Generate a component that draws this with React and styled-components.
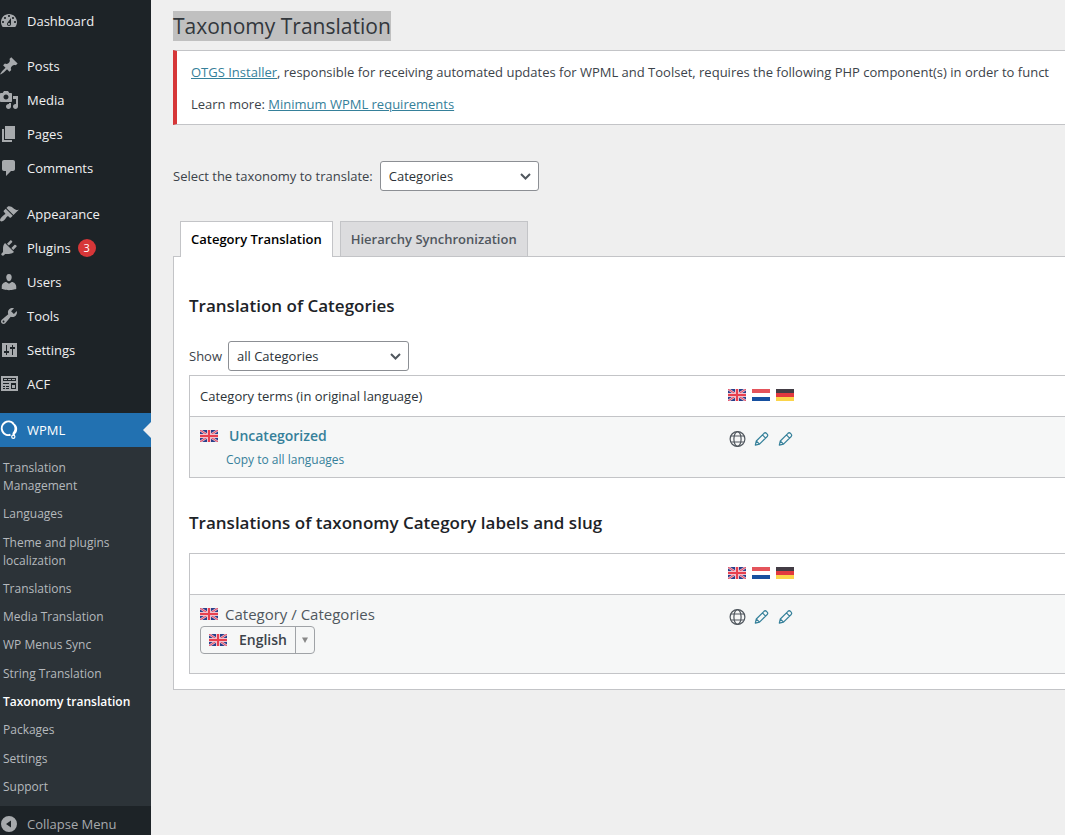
import React from "react";
import styled, { createGlobalStyle } from "styled-components";

const GlobalStyle = createGlobalStyle`
  *, *::before, *::after { box-sizing: border-box; }
  body {
    margin: 0;
    background: #efefef;
    color: #3c434a;
    font-family: "Open Sans", "Noto Sans", sans-serif;
    font-size: 13px;
    line-height: 18px;
  }
  ul { list-style: none; margin: 0; padding: 0; }
  h1, h2, p { margin: 0; }
  a { color: #35809a; }
`;

const Page = styled.div`
  display: flex;
  min-height: 100vh;
`;

/* Sidebar */

const Sidebar = styled.nav`
  flex: 0 0 151px;
  background: #1d2327;
  padding-top: 4px;
`;

const MenuGroup = styled.ul`
  margin-bottom: ${(p) => (p.$tight ? 11 : 12)}px;
`;

const MenuLink = styled.a`
  position: relative;
  display: flex;
  align-items: center;
  gap: 8px;
  height: 34px;
  margin-left: -1px;
  color: ${(p) => (p.$active ? "#fff" : "#f0f0f1")};
  background: ${(p) => (p.$active ? "#2271b1" : "transparent")};
  text-decoration: none;

  svg { flex: none; color: ${(p) => (p.$active ? "#fff" : "#a7aaad")}; }

  &::after {
    content: "";
    display: ${(p) => (p.$active ? "block" : "none")};
    position: absolute;
    right: 0;
    border: 8px solid transparent;
    border-left-width: 0;
    border-right-color: #efefef;
  }
`;

const Badge = styled.span`
  min-width: 18px;
  margin-left: -1px;
  border-radius: 9px;
  background: #d63638;
  color: #fff;
  font-size: 11px;
  text-align: center;
`;

const Submenu = styled.ul`
  display: flex;
  flex-direction: column;
  justify-content: space-between;
  min-height: 359px;
  padding: 12px 20px 10px 3px;
  background: #2c3338;
`;

const SubmenuLink = styled.a`
  display: block;
  color: ${(p) => (p.$current ? "#fff" : "#b5b9bd")};
  font-size: 12px;
  font-weight: ${(p) => (p.$current ? 600 : 400)};
  text-decoration: none;
`;

const CollapseButton = styled.button`
  display: flex;
  align-items: center;
  gap: 8px;
  width: 100%;
  height: 27px;
  margin-left: -1px;
  padding: 8px 0 0;
  border: 0;
  background: none;
  color: #a7aaad;
  font: inherit;
`;

/* Content */

const Content = styled.main`
  flex: 1;
  min-width: 0;
  padding: 11px 0 24px 22px;
  overflow: hidden;
`;

const Title = styled.h1`
  width: fit-content;
  background: #c0c0c0;
  color: #32373c;
  font-size: 21px;
  font-weight: 400;
  line-height: 30px;
`;

const Notice = styled.section`
  display: flex;
  flex-direction: column;
  gap: 14px;
  margin: 9px 0 36px;
  padding: 12px 0 11px 14px;
  border: solid #c3c4c7;
  border-width: 1px 0;
  border-left: 4px solid #d63638;
  background: #fff;
  white-space: nowrap;
`;

const Field = styled.label`
  display: flex;
  align-items: center;
  gap: ${(p) => p.$gap}px;
`;

const SelectBox = styled.span`
  position: relative;
  width: ${(p) => p.$width}px;

  svg {
    position: absolute;
    right: 7px;
    top: 9px;
    pointer-events: none;
  }
`;

const Select = styled.select`
  appearance: none;
  display: block;
  width: 100%;
  height: 30px;
  padding: 0 24px 0 8px;
  border: 1px solid #8c8f94;
  border-radius: 3px;
  background: #fff;
  color: #2c3338;
  font: inherit;
`;

const Tabs = styled.div`
  display: flex;
  gap: 7px;
  margin-top: 30px;
  padding-left: 7px;
`;

const Tab = styled.button`
  height: ${(p) => (p.$active ? 36 : 35)}px;
  margin-bottom: ${(p) => (p.$active ? -1 : 0)}px;
  padding: 0 10px ${(p) => (p.$active ? 1 : 0)}px;
  border: 1px solid #c3c4c7;
  border-bottom: 0;
  background: ${(p) => (p.$active ? "#fff" : "#dcdcde")};
  color: ${(p) => (p.$active ? "#000" : "#50575e")};
  font: inherit;
  font-weight: 600;
  z-index: 1;
`;

const Panel = styled.section`
  padding: 37px 0 15px 15px;
  border: 1px solid #c3c4c7;
  border-right: 0;
  background: #fff;
`;

const Heading = styled.h2`
  margin-bottom: ${(p) => p.$space}px;
  color: #1d2327;
  font-size: 17px;
  font-weight: 600;
  line-height: 24px;
`;

const Table = styled.table`
  width: 100%;
  margin: ${(p) => p.$margin};
  table-layout: fixed;
  border-spacing: 0;
  border: 1px solid #c3c4c7;
  border-right: 0;

  th {
    height: 40px;
    padding: 0 10px;
    color: #2c3338;
    font-weight: 400;
    text-align: left;
  }
  td {
    height: ${(p) => p.$rowHeight}px;
    padding: 10px 10px 8px;
    border-top: 1px solid #c3c4c7;
    background: #f6f7f7;
    vertical-align: top;
  }
  th:first-child { width: 60%; }
  th:last-child, td:last-child { padding-left: 13px; }
  th:last-child { padding-bottom: 2px; }
`;

const IconRow = styled.div`
  display: flex;
  align-items: center;
  gap: 6px;
  margin-top: ${(p) => p.$drop || 0}px;
`;

const IconButton = styled.button`
  display: flex;
  width: 18px;
  height: 18px;
  padding: 0;
  border: 0;
  background: none;
  color: ${(p) => p.$color};
`;

const TermLine = styled.div`
  display: flex;
  align-items: center;
  gap: ${(p) => p.$gap}px;
  color: #50575e;
  font-size: ${(p) => p.$size}px;
`;

const TermLink = styled.a`
  font-weight: 600;
  text-decoration: none;
`;

const CopyLink = styled.a`
  display: block;
  width: fit-content;
  margin: 6px 0 0 26px;
  font-size: 12px;
  text-decoration: none;
`;

const LanguageBox = styled.label`
  display: flex;
  align-items: center;
  width: 115px;
  height: 28px;
  margin-top: 3px;
  padding-left: 8px;
  border: 1px solid #a0a3a7;
  border-radius: 4px;

  > svg:last-child {
    flex: none;
    box-sizing: content-box;
    height: 100%;
    padding: 0 5px;
    border-left: 1px solid #a0a3a7;
  }
`;

const LanguageSelect = styled.select`
  appearance: none;
  flex: 1;
  min-width: 0;
  padding: 0 0 0 12px;
  border: 0;
  background: none;
  color: #3c434a;
  font: inherit;
  font-size: 14px;
  font-weight: 600;
`;

const paths = {
  dashboard:
    "M3.76 16h12.48c1.1-1.37 1.76-3.11 1.76-5 0-4.42-3.58-8-8-8s-8 3.58-8 8c0 1.89.66 3.63 1.76 5zM10 4c.55 0 1 .45 1 1s-.45 1-1 1-1-.45-1-1 .45-1 1-1zM6 6c.55 0 1 .45 1 1s-.45 1-1 1-1-.45-1-1 .45-1 1-1zm8 0c.55 0 1 .45 1 1s-.45 1-1 1-1-.45-1-1 .45-1 1-1zm-5.37 5.55L12 7v6c0 1.1-.9 2-2 2s-2-.9-2-2c0-.57.24-1.08.63-1.45zM4 10c.55 0 1 .45 1 1s-.45 1-1 1-1-.45-1-1 .45-1 1-1zm12 0c.55 0 1 .45 1 1s-.45 1-1 1-1-.45-1-1 .45-1 1-1zm-5 3c0-.55-.45-1-1-1s-1 .45-1 1 .45 1 1 1 1-.45 1-1z",
  pin: "M10.44 3.02l1.82-1.82 6.36 6.35-1.83 1.82c-1.05-.68-2.48-.57-3.41.36l-.75.75c-.92.93-1.04 2.35-.35 3.41l-1.83 1.82-2.41-2.41-2.8 2.79c-.42.42-3.38 2.71-3.8 2.29s1.86-3.39 2.28-3.81l2.79-2.79L4.1 9.36l1.83-1.82c1.05.69 2.48.57 3.4-.36l.75-.75c.93-.92 1.05-2.35.36-3.41z",
  media:
    "M13 11V4c0-.55-.45-1-1-1h-1.67L9 1H5L3.67 3H2c-.55 0-1 .45-1 1v7c0 .55.45 1 1 1h10c.55 0 1-.45 1-1zM7 4.5c1.38 0 2.5 1.12 2.5 2.5S8.38 9.5 7 9.5 4.5 8.38 4.5 7 5.62 4.5 7 4.5zM14 6h5v10.5c0 1.38-1.12 2.5-2.5 2.5S14 17.88 14 16.5s1.12-2.5 2.5-2.5c.17 0 .34.02.5.05V9h-3V6zm-4 8.05V13h2v3.5c0 1.38-1.12 2.5-2.5 2.5S7 17.88 7 16.5 8.12 14 9.5 14c.17 0 .34.02.5.05z",
  pages: "M6 15V2h10v13H6zm-1 1h8v2H3V5h2v11z",
  comments:
    "M5 2h9c1.1 0 2 .9 2 2v7c0 1.1-.9 2-2 2h-2l-5 5v-5H5c-1.1 0-2-.9-2-2V4c0-1.1.9-2 2-2z",
  brush:
    "M14.48 11.06L7.41 3.99l1.5-1.5c.5-.56 2.3-.47 3.51.32 1.21.8 1.43 1.28 2.91 2.1 1.18.64 2.45 1.26 4.45.85zm-.71.71L6.7 4.7 4.93 6.47c-.39.39-.39 1.02 0 1.41l1.06 1.06c.39.39.39 1.03 0 1.42-.6.6-1.43 1.11-2.21 1.69-.35.26-.7.53-1.01.84C1.43 14.23.4 16.08 1.4 17.07c.99 1 2.84-.03 4.18-1.36.31-.31.58-.66.85-1.02.57-.78 1.08-1.61 1.69-2.21.39-.39 1.02-.39 1.41 0l1.06 1.06c.39.39 1.02.39 1.41 0z",
  plug: "M13.11 4.36L9.87 7.6 8 5.73l3.24-3.24c.35-.34 1.05-.2 1.56.32.52.51.66 1.21.31 1.55zm-8 1.77l.91-1.12 9.01 9.01-1.19.84c-.71.71-2.63 1.16-3.82 1.16H6.14L4.9 17.26c-.59.59-1.54.59-2.12 0-.59-.58-.59-1.53 0-2.12l1.24-1.24v-3.88c0-1.13.4-3.19 1.09-3.89zm7.26 3.97l3.24-3.24c.34-.35 1.04-.21 1.55.31.52.51.66 1.21.31 1.55l-3.24 3.25z",
  user: "M10 9.25c-2.27 0-2.73-3.44-2.73-3.44C7 4.02 7.82 2 9.97 2c2.16 0 2.98 2.02 2.71 3.81 0 0-.41 3.44-2.68 3.44zm0 2.57L12.72 10c2.39 0 4.52 2.33 4.52 4.53v2.49s-3.65 1.13-7.24 1.13c-3.65 0-7.24-1.13-7.24-1.13v-2.49c0-2.25 1.94-4.48 4.47-4.48z",
  wrench:
    "M16.68 9.77c-1.34 1.34-3.3 1.67-4.95.99l-5.41 6.52c-.99.99-2.59.99-3.58 0s-.99-2.59 0-3.57l6.52-5.42c-.68-1.65-.35-3.61.99-4.95 1.28-1.28 3.12-1.62 4.72-1.06l-2.89 2.89 2.82 2.82 2.86-2.87c.53 1.58.18 3.39-1.08 4.65zM3.81 16.21c.4.39 1.04.39 1.43 0 .4-.4.4-1.04 0-1.43-.39-.4-1.03-.4-1.43 0-.39.39-.39 1.03 0 1.43z",
  sliders:
    "M18 17V3H3v14h15zM8 11h2v2H8v2H7v-2H5v-2h2V5h1v6zm5-2h-2V7h2V5h1v2h2v2h-2v6h-1V9z",
  form: "M2 2h17v15H2zM4 4v3h13V4zM5 5h3v1H5zm4 0h3v1H9zm4 0h3v1h-3zM4 9h6v1H4zm0 3h2v1H4zm3 0h3v1H7zm-3 2h2v1H4zm3 0h3v1H7zm5-5h5v6h-5zm1 2v3h3v-3z",
  collapse: "M10 2a8 8 0 1 0 0 16 8 8 0 0 0 0-16zm2 11.500L7 10l5-3.500z",
};

const MenuIcon = ({ name }) => (
  <svg width="20" height="20" viewBox="0 0 20 20" aria-hidden="true">
    <path d={paths[name]} fill="currentColor" fillRule="evenodd" />
  </svg>
);

const WpmlLogo = () => (
  <svg width="20" height="20" viewBox="0 0 20 20" fill="none" stroke="currentColor" aria-hidden="true">
    <path d="M11.500 14.800A6.800 6.800 0 1 1 14.500 3.600" strokeWidth="2" />
    <path
      d="M13 2.200c4.500 1.600 6.300 5.800 4.600 9.800-.8 1.800-2.200 1.900-2 3.600l-1.800-.2c-.6-1.600-.2-2.600.6-3.600 1.600-2 1.800-5.400-1.400-8z"
      fill="currentColor"
      stroke="none"
    />
    <circle cx="14.300" cy="16.800" r="1.600" strokeWidth="1.200" />
  </svg>
);

const Chevron = () => (
  <svg width="13" height="13" viewBox="0 0 13 13" fill="none" stroke="#50575e" strokeWidth="2" aria-hidden="true">
    <path d="M2 4l4.500 4.500L11 4" />
  </svg>
);

const Flag = ({ code }) => (
  <svg width="18" height="12" viewBox="0 0 18 12" role="img" aria-label={code}>
    {code === "en" && (
      <>
        <path fill="#27408b" d="M0 0h18v12H0z" />
        <path stroke="#e9b9cb" strokeWidth="2.400" d="M0 0l18 12M18 0L0 12" />
        <path stroke="#e2485f" strokeWidth="1" d="M0 0l18 12M18 0L0 12" />
        <path stroke="#f0c3ce" strokeWidth="4" d="M9 0v12M0 6h18" />
        <path stroke="#e8404f" strokeWidth="2" d="M9 0v12M0 6h18" />
      </>
    )}
    {code === "nl" && (
      <>
        <path fill="#fff" d="M0 0h18v12H0z" />
        <path fill="#e4545b" d="M0 0h18v4H0z" />
        <path fill="#1650a0" d="M0 8h18v4H0z" />
      </>
    )}
    {code === "de" && (
      <>
        <path fill="#433c45" d="M0 0h18v4H0z" />
        <path fill="#e2383f" d="M0 4h18v4H0z" />
        <path fill="#fbd44a" d="M0 8h18v4H0z" />
      </>
    )}
  </svg>
);

const Globe = () => (
  <svg width="18" height="18" viewBox="0 0 18 18" fill="none" stroke="currentColor" strokeWidth="1.200" aria-hidden="true">
    <circle cx="9.500" cy="9" r="7.400" />
    <ellipse cx="9.500" cy="9" rx="3.600" ry="7.400" />
    <path d="M3 6h13M3 12h13" />
  </svg>
);

const Pencil = () => (
  <svg width="18" height="18" viewBox="0 0 18 18" fill="none" stroke="currentColor" strokeWidth="1.200" strokeLinejoin="round" aria-hidden="true">
    <path d="M3.300 15.200l1-4.200 7.700-7.700q1.200-1.100 2.400 0l.8.800q1.100 1.200 0 2.400L7.500 14.200zM10.400 4.900l3.200 3.200M4.300 11l3.200 3.200" />
  </svg>
);

const menuGroups = [
  [{ label: "Dashboard", icon: "dashboard" }],
  [
    { label: "Posts", icon: "pin" },
    { label: "Media", icon: "media" },
    { label: "Pages", icon: "pages" },
    { label: "Comments", icon: "comments" },
  ],
  [
    { label: "Appearance", icon: "brush" },
    { label: "Plugins", icon: "plug", count: 3 },
    { label: "Users", icon: "user" },
    { label: "Tools", icon: "wrench" },
    { label: "Settings", icon: "sliders" },
    { label: "ACF", icon: "form" },
  ],
];

const submenu = [
  "Translation Management",
  "Languages",
  "Theme and plugins localization",
  "Translations",
  "Media Translation",
  "WP Menus Sync",
  "String Translation",
  "Taxonomy translation",
  "Packages",
  "Settings",
  "Support",
];

const LanguageFlags = () => (
  <IconRow>
    <Flag code="en" />
    <Flag code="nl" />
    <Flag code="de" />
  </IconRow>
);

const TranslationActions = () => (
  <IconRow $drop={3}>
    <IconButton $color="#50575e" aria-label="Original language"><Globe /></IconButton>
    <IconButton $color="#35809a" aria-label="Edit Dutch translation"><Pencil /></IconButton>
    <IconButton $color="#35809a" aria-label="Edit German translation"><Pencil /></IconButton>
  </IconRow>
);

export default function App() {
  return (
    <Page>
      <GlobalStyle />
      <Sidebar>
        {menuGroups.map((group, i) => (
          <MenuGroup key={i} $tight={i === 0}>
            {group.map((item) => (
              <li key={item.label}>
                <MenuLink href="#">
                  <MenuIcon name={item.icon} />
                  {item.label}
                  {item.count && <Badge>{item.count}</Badge>}
                </MenuLink>
              </li>
            ))}
          </MenuGroup>
        ))}
        <MenuLink href="#" $active>
          <WpmlLogo />
          WPML
        </MenuLink>
        <Submenu>
          {submenu.map((label) => (
            <li key={label}>
              <SubmenuLink href="#" $current={label === "Taxonomy translation"}>
                {label}
              </SubmenuLink>
            </li>
          ))}
        </Submenu>
        <CollapseButton>
          <MenuIcon name="collapse" />
          Collapse Menu
        </CollapseButton>
      </Sidebar>

      <Content>
        <Title>Taxonomy Translation</Title>
        <Notice>
          <p>
            <a href="#">OTGS Installer</a>, responsible for receiving automated updates for WPML and
            Toolset, requires the following PHP component(s) in order to funct
          </p>
          <p>
            Learn more: <a href="#">Minimum WPML requirements</a>
          </p>
        </Notice>

        <Field $gap={7}>
          Select the taxonomy to translate:
          <SelectBox $width={159}>
            <Select>
              <option>Categories</option>
            </Select>
            <Chevron />
          </SelectBox>
        </Field>

        <Tabs role="tablist">
          <Tab role="tab" aria-selected="true" $active>Category Translation</Tab>
          <Tab role="tab" aria-selected="false">Hierarchy Synchronization</Tab>
        </Tabs>

        <Panel>
          <Heading $space={23}>Translation of Categories</Heading>
          <Field $gap={6}>
            Show
            <SelectBox $width={181}>
              <Select>
                <option>all Categories</option>
              </Select>
              <Chevron />
            </SelectBox>
          </Field>
          <Table $margin="4px 0 33px" $rowHeight={61}>
            <thead>
              <tr>
                <th>Category terms (in original language)</th>
                <th><LanguageFlags /></th>
              </tr>
            </thead>
            <tbody>
              <tr>
                <td>
                  <TermLine $gap={11} $size={14}>
                    <Flag code="en" />
                    <TermLink href="#">Uncategorized</TermLink>
                  </TermLine>
                  <CopyLink href="#">Copy to all languages</CopyLink>
                </td>
                <td><TranslationActions /></td>
              </tr>
            </tbody>
          </Table>

          <Heading $space={18}>Translations of taxonomy Category labels and slug</Heading>
          <Table $margin="0" $rowHeight={79}>
            <thead>
              <tr>
                <th aria-label="Labels" />
                <th><LanguageFlags /></th>
              </tr>
            </thead>
            <tbody>
              <tr>
                <td>
                  <TermLine $gap={7} $size={15}>
                    <Flag code="en" />
                    Category / Categories
                  </TermLine>
                  <LanguageBox>
                    <Flag code="en" />
                    <LanguageSelect aria-label="Language">
                      <option>English</option>
                    </LanguageSelect>
                    <svg width="8" viewBox="0 0 8 8" aria-hidden="true">
                      <path d="M1 1.500h6L4 7z" fill="#888" />
                    </svg>
                  </LanguageBox>
                </td>
                <td><TranslationActions /></td>
              </tr>
            </tbody>
          </Table>
        </Panel>
      </Content>
    </Page>
  );
}
